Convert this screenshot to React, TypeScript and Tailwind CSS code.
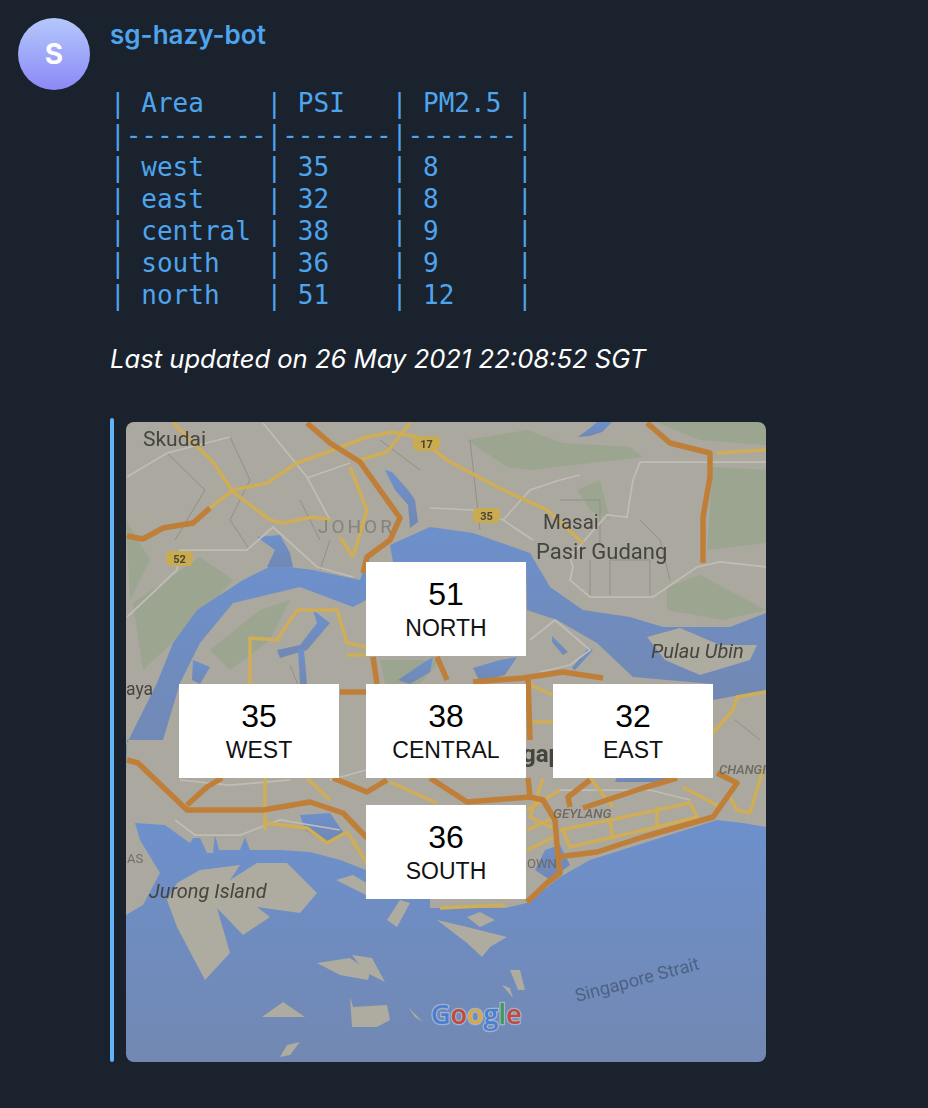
const roads = {
  orange: [
    "M307 423L330 443L360 462L400 518L390 540L367 557L363 573",
    "M373 657L377 684",
    "M340 692H366",
    "M437 657L447 680",
    "M473 682L523 678L563 672L603 678",
    "M528 678L530 740",
    "M127 536L143 539L163 528L193 523L210 508",
    "M647 423L670 443L710 453L710 477L703 517L703 563",
    "M127 760L138 763L187 810H263L310 802L343 813L367 838",
    "M187 805L207 787L222 778",
    "M333 778L367 792L387 780",
    "M430 778L467 802L530 797L543 800L555 820L558 857L560 873L547 883L527 902",
    "M557 857L597 852L643 837L713 817L737 783L717 773",
    "M570 807L568 797L590 780",
    "M583 808L643 788L677 778",
    "M528 778L530 797",
  ],
  yellow: [
    "M173 423L213 462L233 492L270 520L283 523L313 517L330 520",
    "M210 508L233 490L267 483L297 463L333 450L367 437L393 432L417 437L447 460L497 487L547 510L583 543",
    "M360 460L387 452L410 423",
    "M350 467L367 510L353 557",
    "M340 537L353 557",
    "M297 610H337L347 643L366 647",
    "M297 610L277 640L250 638L250 684",
    "M347 655H366",
    "M717 453L766 450",
    "M713 733L733 710L737 697L766 692",
    "M265 778V830",
    "M265 823L307 828L327 843L347 832L367 863",
    "M307 778L330 800",
    "M390 782L437 803",
    "M543 778L530 817L557 830",
    "M527 810L560 790M527 830L560 815M527 850L558 835",
    "M560 830L610 820L690 803L697 817L657 827L600 840L570 847L563 830",
    "M610 820L613 840",
    "M657 807V827",
    "M590 778L613 807",
    "M683 787L720 807",
    "M763 770L750 813L737 810L730 797",
    "M505 905L440 908",
    "M528 684L553 695M528 722H553",
  ],
  pale: [
    "M640 462H766",
    "M640 462L633 480L627 517L607 515L570 557L573 567L570 580L590 597H653L697 567L720 562L766 567",
    "M430 508L473 510L503 520L533 540",
    "M127 477L167 453L230 437",
    "M127 617L177 570L180 550H247L273 527L317 567L353 577",
    "M263 423L307 477L330 520",
    "M307 478L350 463",
    "M503 520L530 490L560 480L580 475",
    "M530 640L555 620L590 650L570 665L540 672",
    "M175 820L195 835H240L280 820L340 830",
    "M180 780L230 785L290 780",
    "M560 790L650 790L690 800",
    "M330 780L366 770",
  ],
  thin: [
    "M167 453L205 490L175 540",
    "M230 437L250 480L230 520L250 550",
    "M330 540L320 570",
    "M480 530L470 440",
    "M560 500L600 500L600 545",
    "M610 560V595M590 560V595M610 560H650V595",
    "M640 520L660 540L670 580",
    "M290 665L300 690",
    "M735 720L760 740",
    "M380 440L420 470M300 500L320 540",
  ],
};

const water = [
  "M126 770L127 740L163 740L180 683L200 643L233 603L300 587L353 607L366 600L366 562L360 580L313 570L273 565L243 580L197 610L173 643L157 683L126 745Z",
  "M390 545L430 527L473 533L530 553L550 587L583 610L630 617L663 627L730 627L766 613V690L713 700L713 684L633 677L597 643L557 620L527 610L526 562L393 562Z",
  "M126 915L143 905L160 873L140 840L135 823L165 825L190 843L193 838L200 838L207 853L213 853L215 835L219 850L240 850L245 837L250 850L280 850L310 852L340 860L366 870V899H430V908H505L527 903L560 877L590 860L663 837L717 820L743 823L766 827V1062H126Z",
  "M257 537L280 535L290 553L293 567L267 567L275 550Z",
  "M313 610L330 623L307 650L280 658L277 650L300 645L317 623Z",
  "M298 650L304 650L307 684H300Z",
  "M193 660L210 667L200 684L192 680Z",
  "M385 470L392 472L408 490L415 500L418 522L410 528L408 505L395 490Z",
  "M578 437L590 428L597 422H612L602 432L590 436Z",
  "M552 636L568 652L563 655L552 642Z",
  "M593 650L575 670L572 668L588 648Z",
  "M398 680L420 665L433 657L430 672L410 684Z",
  "M473 668L500 660L517 657L505 675L480 682Z",
  "M300 815L330 813L345 835L325 842L305 830Z",
  "M545 850L560 845L570 865L550 880L535 870Z",
  "M620 770L670 770L665 782L615 782Z",
];

const land = [
  "M200 870L240 865L230 880L257 863L287 863L317 893L300 913L257 907L270 917L243 935L217 908L230 953L205 980L177 927L167 900L177 883Z",
  "M317 963L350 958L370 972L368 980L340 975Z",
  "M352 955L372 958L385 982L365 972Z",
  "M262 1017L283 1002L305 1017Z",
  "M350 997L353 1007L387 1005L390 1020L377 1027L352 1027Z",
  "M280 1057L287 1045L300 1042L290 1055Z",
  "M408 1007L423 1022L415 1017Z",
  "M437 920L467 927L507 937L490 947L482 957L467 943Z",
  "M467 917L480 912L495 920L480 927Z",
  "M510 970L520 970L525 990L518 990Z",
  "M502 985L510 988L513 998Z",
  "M336 880L353 875L370 885V897Z",
  "M387 920L400 900L410 903L397 927Z",
  "M647 637L680 628L720 645L757 645L750 660L700 675L665 660Z",
];

const green = [
  "M467 440L527 430L563 443L630 447L643 457L530 470L507 467Z",
  "M713 467L766 470V543L707 550Z",
  "M667 587L700 575L766 610L723 620L667 610Z",
  "M133 603L200 557L233 580L193 623L143 670Z",
  "M126 520L150 560L130 600Z",
  "M260 610L290 600L270 640L230 670L210 650Z",
  "M577 490L600 480L610 520L590 510Z",
  "M650 420L766 420V445L700 440Z",
  "M380 660L440 660L420 684H385Z",
];

function MapArt() {
  return (
    <svg viewBox="126 422 640 640" className="block h-full w-full blur-[0.7px]">
      <defs>
        <linearGradient id="sea" x1="0" y1="0" x2="0" y2="1">
          <stop offset="0" stopColor="#6d90cc" />
          <stop offset="1" stopColor="#7288b2" />
        </linearGradient>
      </defs>
      <rect x="126" y="422" width="640" height="640" fill="#aaa89f" />
      {green.map((d) => (
        <path key={d} d={d} fill="#9ca590" />
      ))}
      {water.map((d) => (
        <path key={d} d={d} fill="url(#sea)" />
      ))}
      {land.map((d) => (
        <path key={d} d={d} fill="#aeaca1" />
      ))}
      {roads.thin.map((d) => (
        <path key={d} d={d} fill="none" stroke="#918f88" strokeWidth="1" />
      ))}
      {roads.pale.map((d) => (
        <path key={d} d={d} fill="none" stroke="#bfbdb5" strokeWidth="1.75" />
      ))}
      {roads.yellow.map((d) => (
        <path key={d} d={d} fill="none" stroke="#d0ad57" strokeWidth="3.5" strokeLinejoin="round" />
      ))}
      {roads.orange.map((d) => (
        <path key={d} d={d} fill="none" stroke="#c07f38" strokeWidth="5.5" strokeLinejoin="round" />
      ))}

      <g fontFamily="Roboto, sans-serif" fill="#45443f">
        <text x="143" y="446" fontSize="21">Skudai</text>
        <text x="318" y="533" fontSize="19" letterSpacing="3" fill="#85837a">JOHOR</text>
        <text x="543" y="529" fontSize="20.5">Masai</text>
        <text x="536" y="559" fontSize="22">Pasir Gudang</text>
        <text x="651" y="658" fontSize="20" fontStyle="italic">Pulau Ubin</text>
        <text x="126" y="695" fontSize="17.5">aya</text>
        <text x="149" y="898" fontSize="20" fontStyle="italic">Jurong Island</text>
        <text x="127" y="863" fontSize="13" fill="#706e68">AS</text>
        <text x="553" y="818" fontSize="13.5" fontStyle="italic" fontWeight="500" fill="#6c6a62">GEYLANG</text>
        <text x="719" y="774" fontSize="13" fontStyle="italic" fontWeight="500" fill="#6c6a62">CHANGI</text>
        <text x="522" y="762" fontSize="24" fontWeight="700">gap</text>
        <text x="527" y="868" fontSize="13" fill="#6c6a62">OWN</text>
        <text x="577" y="1002" fontSize="18" fill="#4d6285" transform="rotate(-15 577 1002)">Singapore Strait</text>
      </g>

      {[
        { label: "17", x: 413, y: 436, w: 27 },
        { label: "52", x: 166, y: 551, w: 27 },
        { label: "35", x: 473, y: 508, w: 27 },
      ].map((b) => (
        <g key={b.label}>
          <path
            d={`M${b.x} ${b.y + 3}L${b.x + 3} ${b.y}H${b.x + b.w - 3}L${b.x + b.w} ${b.y + 3}V${b.y + 11}L${b.x + b.w - 3} ${b.y + 15}H${b.x + 3}L${b.x} ${b.y + 11}Z`}
            fill="#c9ab52"
          />
          <text x={b.x + b.w / 2} y={b.y + 12} fontSize="11" fontWeight="700" textAnchor="middle" fontFamily="Roboto, sans-serif" fill="#4a4536">
            {b.label}
          </text>
        </g>
      ))}

      <text y="1024" fontSize="27" fontFamily="'Open Sans', sans-serif" fontWeight="600" stroke="#a3b2cc" strokeWidth="2.5" paintOrder="stroke">
        <tspan x="431" fill="#4a7fd0">G</tspan>
        <tspan fill="#c5483c">o</tspan>
        <tspan fill="#d8a93c">o</tspan>
        <tspan fill="#4a7fd0">g</tspan>
        <tspan fill="#3f9a55">l</tspan>
        <tspan fill="#c5483c">e</tspan>
      </text>
    </svg>
  );
}

function Stat({ value, name }: { value: number; name: string }) {
  return (
    <div className="flex h-[94px] w-40 flex-col items-center bg-white pt-[12px] font-['Liberation_Sans',Arial,sans-serif] text-black">
      <div className="text-[32px] leading-[41px]">{value}</div>
      <div className="text-[23px] leading-[27px] text-[#111]">{name}</div>
    </div>
  );
}

const table = `| Area    | PSI   | PM2.5 |
|---------|-------|-------|
| west    | 35    | 8     |
| east    | 32    | 8     |
| central | 38    | 9     |
| south   | 36    | 9     |
| north   | 51    | 12    |`;

export default function App() {
  return (
    <div className="flex min-h-screen gap-5 bg-[#1a222d] pl-[18px] pt-[18px] font-['Inter',sans-serif]">
      <div className="flex size-[72px] shrink-0 items-center justify-center rounded-full bg-gradient-to-b from-[#b4c8fb] to-[#8d88f6] text-[28px] font-bold text-white">
        S
      </div>
      <div className="flex flex-col">
        <div className="h-[34px] text-[26px] font-semibold leading-[34px] text-[#4ea5ee]">sg-hazy-bot</div>
        <pre className="mt-[35px] font-['DejaVu_Sans_Mono',monospace] text-[26px] leading-[32px] text-[#4ea5ee]">{table}</pre>
        <p className="mt-8 text-[25.6px] italic leading-8 text-white">Last updated on 26 May 2021 22:08:52 SGT</p>
        <div className="mt-[43px] flex gap-3">
          <div className="h-[644px] w-1 rounded-sm bg-[#63b3f5]" />
          <div className="relative mt-1 size-[640px] overflow-hidden rounded-lg">
            <MapArt />
            <div className="absolute inset-0 flex flex-col items-center gap-[27.5px] pt-[140px]">
              <Stat value={51} name="NORTH" />
              <div className="flex gap-[27px]">
                <Stat value={35} name="WEST" />
                <Stat value={38} name="CENTRAL" />
                <Stat value={32} name="EAST" />
              </div>
              <Stat value={36} name="SOUTH" />
            </div>
          </div>
        </div>
      </div>
    </div>
  );
}
